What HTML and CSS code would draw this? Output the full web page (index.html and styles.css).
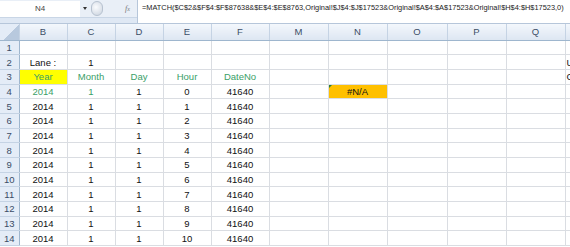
FILE: index.html
```html
<!DOCTYPE html>
<html lang="en">
<head>
    <meta charset="UTF-8">
    <title>Sheet - N4</title>
    <link rel="stylesheet" href="styles.css">
</head>
<body>
    <div class="formula-bar">
        <div class="name-area">
            <div class="name-row">
                <div class="name-box">N4</div>
                <span class="drop"></span>
                <span class="grip"></span>
                <span class="fx"><i>f</i><small>x</small></span>
            </div>
        </div>
        <div class="formula">=MATCH($C$2&amp;$F$4:$F$87638&amp;$E$4:$E$8763,Original!$J$4:$J$17523&amp;Original!$A$4:$A$17523&amp;Original!$H$4:$H$17523,0)</div>
    </div>

    <table class="sheet">
        <colgroup>
            <col class="c-rh">
            <col class="c-48"><col class="c-48"><col class="c-48"><col class="c-48">
            <col class="c-58">
            <col class="c-59"><col class="c-59"><col class="c-60"><col class="c-59"><col class="c-59">
            <col class="c-5">
        </colgroup>
        <tr class="hdr">
            <th class="corner"></th>
            <th>B</th><th>C</th><th>D</th><th>E</th><th>F</th><th class="after-hidden">M</th><th>N</th><th>O</th><th>P</th><th>Q</th><th></th>
        </tr>
        <tr><th>1</th><td></td><td></td><td></td><td></td><td></td><td></td><td></td><td></td><td></td><td></td><td></td></tr>
        <tr><th>2</th><td>Lane :</td><td>1</td><td></td><td></td><td></td><td></td><td></td><td></td><td></td><td></td><td class="cut">U</td></tr>
        <tr><th>3</th><td class="green yellow">Year</td><td class="green">Month</td><td class="green">Day</td><td class="green">Hour</td><td class="green">DateNo</td><td></td><td></td><td></td><td></td><td></td><td class="cut">C</td></tr>
        <tr><th>4</th><td class="green">2014</td><td class="green">1</td><td>1</td><td>0</td><td>41640</td><td></td><td class="err">#N/A</td><td></td><td></td><td></td><td></td></tr>
        <tr><th>5</th><td>2014</td><td>1</td><td>1</td><td>1</td><td>41640</td><td></td><td></td><td></td><td></td><td></td><td></td></tr>
        <tr><th>6</th><td>2014</td><td>1</td><td>1</td><td>2</td><td>41640</td><td></td><td></td><td></td><td></td><td></td><td></td></tr>
        <tr><th>7</th><td>2014</td><td>1</td><td>1</td><td>3</td><td>41640</td><td></td><td></td><td></td><td></td><td></td><td></td></tr>
        <tr><th>8</th><td>2014</td><td>1</td><td>1</td><td>4</td><td>41640</td><td></td><td></td><td></td><td></td><td></td><td></td></tr>
        <tr><th>9</th><td>2014</td><td>1</td><td>1</td><td>5</td><td>41640</td><td></td><td></td><td></td><td></td><td></td><td></td></tr>
        <tr><th>10</th><td>2014</td><td>1</td><td>1</td><td>6</td><td>41640</td><td></td><td></td><td></td><td></td><td></td><td></td></tr>
        <tr><th>11</th><td>2014</td><td>1</td><td>1</td><td>7</td><td>41640</td><td></td><td></td><td></td><td></td><td></td><td></td></tr>
        <tr><th>12</th><td>2014</td><td>1</td><td>1</td><td>8</td><td>41640</td><td></td><td></td><td></td><td></td><td></td><td></td></tr>
        <tr><th>13</th><td>2014</td><td>1</td><td>1</td><td>9</td><td>41640</td><td></td><td></td><td></td><td></td><td></td><td></td></tr>
        <tr><th>14</th><td>2014</td><td>1</td><td>1</td><td>10</td><td>41640</td><td></td><td></td><td></td><td></td><td></td><td></td></tr>
    </table>
</body>
</html>
```

FILE: styles.css
```css
body {
    margin: 0;
    width: 570px;
    height: 247px;
    overflow: hidden;
    background: #fff;
    font-family: "Liberation Sans", Arial, sans-serif;
}

/* formula bar */
.formula-bar {
    display: flex;
    height: 24px;
    background: #dfe8f4;
    border-bottom: 1px solid #b6c6da;
    box-sizing: border-box;
}

.name-area {
    width: 137px;
    flex: none;
}

.name-row {
    display: flex;
    align-items: center;
    height: 17px;
    background: #e9eff7;
    border-bottom: 1px solid #c9d6e6;
}

.name-box {
    width: 80px;
    height: 16px;
    line-height: 16px;
    background: #fff;
    text-align: center;
    font-size: 8px;
    color: #444;
}

.drop {
    width: 0;
    height: 0;
    margin-left: 3px;
    border-left: 2px solid transparent;
    border-right: 2px solid transparent;
    border-top: 3px solid #333;
}

.grip {
    width: 10px;
    height: 13px;
    margin-left: 4px;
    border-radius: 6px;
    background: radial-gradient(circle at 40% 40%, #fbfcfe, #c9d2de);
    border: 1px solid #b7c2d0;
}

.fx {
    margin-left: 22px;
    font-family: "Liberation Serif", serif;
    font-size: 8px;
    color: #777;
}

.fx small {
    font-size: 6px;
    font-style: italic;
}

.formula {
    flex: 1;
    background: #fff;
    border-left: 1px solid #b6c6da;
    padding: 3px 0 0 4px;
    font-size: 7.4px;
    color: #222;
    white-space: nowrap;
    overflow: hidden;
}

/* grid */
.sheet {
    table-layout: fixed;
    border-collapse: collapse;
    width: 570px;
    font-size: 9.5px;
    color: #111;
}

.c-rh { width: 19px; }
.c-48 { width: 48px; }
.c-58 { width: 58px; }
.c-59 { width: 59px; }
.c-60 { width: 60px; }
.c-5 { width: 5px; }

.sheet tr {
    height: 14.7px;
}

.sheet tr.hdr {
    height: 16px;
}

.sheet th {
    padding: 0;
    font-weight: normal;
    color: #3b4d66;
    background: #e4ecf7;
    border-right: 1px solid #9eb6ce;
    border-bottom: 1px solid #c5d3e4;
}

.hdr th {
    background: linear-gradient(#f3f7fc, #dde6f2);
    border-bottom: 1px solid #9eb6ce;
    border-right: 1px solid #c5d3e4;
}

.hdr th.after-hidden {
    border-left: 1px solid #9eb6ce;
}

.corner {
    background: linear-gradient(135deg, transparent 55%, #b8c9de 56%) #e4ecf7 !important;
}

.sheet td {
    padding: 0;
    text-align: center;
    border-right: 1px solid #dadde2;
    border-bottom: 1px solid #dadde2;
    white-space: nowrap;
    overflow: hidden;
}

.sheet td.cut {
    text-align: left;
    padding-left: 1px;
}

.green {
    color: #3aa068;
}

.yellow {
    background: #ffff00;
}

.err {
    position: relative;
    background: #ffc000;
}

.err::before {
    content: "";
    position: absolute;
    left: 0;
    top: 0;
    border-top: 3px solid #2e7d32;
    border-right: 3px solid transparent;
}
```
